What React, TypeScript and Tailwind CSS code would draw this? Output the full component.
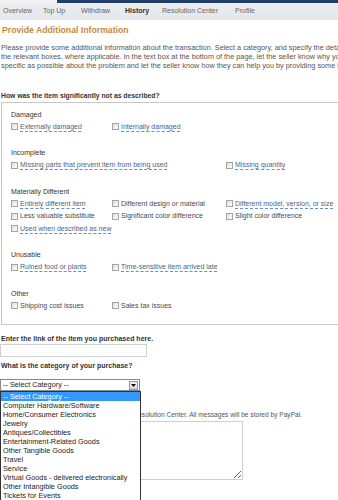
const TABS = [
  { label: "Overview", x: "w-[40px]" },
  { label: "Top Up", x: "w-[38px]" },
  { label: "Withdraw", x: "w-[44px]" },
  { label: "History", x: "w-[37px]", active: true },
  { label: "Resolution Center", x: "w-[73px]" },
  { label: "Profile", x: "w-[40px]" },
];

const INTRO_LINES = [
  "Please provide some additional information about the transaction. Select a category, and specify the details of the problem by checking",
  "the relevant boxes, where applicable. In the text box at the bottom of the page, let the seller know why you are not satisfied. Be as",
  "specific as possible about the problem and let the seller know how they can help you by providing some information on a resolution.",
];

type Reason = { label: string; tip?: boolean; wide?: boolean };

const SECTIONS: { title: string; reasons: Reason[] }[] = [
  {
    title: "Damaged",
    reasons: [
      { label: "Externally damaged", tip: true },
      { label: "Internally damaged", tip: true },
    ],
  },
  {
    title: "Incomplete",
    reasons: [
      { label: "Missing parts that prevent item from being used", tip: true, wide: true },
      { label: "Missing quantity", tip: true },
    ],
  },
  {
    title: "Materially Different",
    reasons: [
      { label: "Entirely different item", tip: true },
      { label: "Different design or material" },
      { label: "Different model, version, or size", tip: true },
      { label: "Less valuable substitute" },
      { label: "Significant color difference" },
      { label: "Slight color difference" },
      { label: "Used when described as new", tip: true },
    ],
  },
  {
    title: "Unusable",
    reasons: [
      { label: "Ruined food or plants", tip: true },
      { label: "Time-sensitive item arrived late", tip: true },
    ],
  },
  {
    title: "Other",
    reasons: [{ label: "Shipping cost issues" }, { label: "Sales tax issues" }],
  },
];

const CATEGORIES = [
  "-- Select Category --",
  "Computer Hardware/Software",
  "Home/Consumer Electronics",
  "Jewelry",
  "Antiques/Collectibles",
  "Entertainment-Related Goods",
  "Other Tangible Goods",
  "Travel",
  "Service",
  "Virtual Goods - delivered electronically",
  "Other Intangible Goods",
  "Tickets for Events",
];

export default function App() {
  return (
    <div className="min-h-[520px] w-full overflow-hidden bg-white font-['Liberation_Sans',Arial,sans-serif] text-[#555]">
      <div className="w-[480px]">
        {/* header strip + tabs */}
        <div className="flex h-[3px]">
          <div className="w-[57px] bg-[#f2f3f5]" />
          <div className="flex-1 bg-[#213e69]" />
        </div>
        <nav className="flex h-[17px] items-center bg-gradient-to-b from-[#eceef1] to-[#e4e7eb] pl-[3px] text-[7px]">
          {TABS.map((tab) => (
            <span
              key={tab.label}
              className={`${tab.x} ${tab.active ? "font-bold text-[#333]" : "text-[#666]"}`}
            >
              {tab.label}
            </span>
          ))}
        </nav>

        <h1 className="mt-[4px] h-[12px] pl-[2px] text-[8.7px] leading-[12px] font-bold text-[#c68a3e]">
          Provide Additional Information
        </h1>

        <div className="mt-[6.5px] pl-[1px] text-[7.3px] leading-[9px] text-[#555]">
          {INTRO_LINES.map((line) => (
            <div key={line} className="whitespace-nowrap">
              {line}
            </div>
          ))}
        </div>

        <p className="mt-[21px] h-[9px] pl-[1px] text-[6.8px] leading-[9px] font-bold text-[#333]">
          How was the item significantly not as described?
        </p>

        <div className="mt-[2.5px] ml-[1px] border border-[#c8c8c8] pt-[6.5px] pb-[12px] pl-[9px]">
          {SECTIONS.map((section, i) => (
            <ReasonGroup key={section.title} first={i === 0} {...section} />
          ))}
        </div>

        <p className="mt-[9px] h-[9px] pl-[1px] text-[7px] leading-[9px] font-bold text-[#333]">
          Enter the link of the item you purchased here.
        </p>
        <div className="mt-[1px] h-[13px] w-[147px] border border-[#d0d0d0] bg-white" />

        <p className="mt-[4px] h-[9px] pl-[1px] text-[7px] leading-[9px] font-bold text-[#333]">
          What is the category of your purchase?
        </p>

        <div className="relative mt-[9px] w-[140px]">
          <div className="flex h-[12px] items-center border border-[#8a8a8a] bg-white pl-[2px] text-[7.3px] text-[#222]">
            <span className="flex-1">-- Select Category --</span>
            <span className="mr-[1px] flex h-[9px] w-[9px] items-center justify-center border border-[#9a9a9a] bg-gradient-to-b from-[#f4f4f4] to-[#d8d8d8]">
              <svg width="5" height="3" viewBox="0 0 5 3">
                <path d="M0 0h5L2.5 3z" fill="#111" />
              </svg>
            </span>
          </div>
          <ul className="absolute top-full left-0 z-10 w-[141px] border border-[#333] bg-white">
            {CATEGORIES.map((cat, i) => (
              <li
                key={cat}
                className={`h-[9px] px-[2px] text-[7.3px] leading-[9px] whitespace-nowrap ${
                  i === 0 ? "bg-[#3399ff] text-white" : "text-[#222]"
                }`}
              >
                {cat}
              </li>
            ))}
          </ul>
        </div>

        <p className="mt-[19px] h-[9px] pl-[1px] text-[6.6px] leading-[9px] whitespace-nowrap text-[#555]">
          Your message to the seller will be sent to the Resolution Center. All messages will be stored by PayPal.
        </p>
        <textarea className="mt-[1.5px] block h-[59px] w-[243px] border border-[#cfcfcf] bg-white" />
      </div>
    </div>
  );
}

function ReasonGroup({
  title,
  reasons,
  first,
}: {
  title: string;
  reasons: Reason[];
  first: boolean;
}) {
  return (
    <div className={first ? "" : "mt-[15px]"}>
      <h3 className="h-[9px] text-[7px] leading-[9px] text-[#333]">{title}</h3>
      <div className="mt-[2px] grid grid-cols-[101px_114px_max-content]">
        {reasons.map((r) => (
          <label
            key={r.label}
            className={`flex h-[12.5px] items-center text-[7px] whitespace-nowrap ${r.wide ? "col-span-2" : ""}`}
          >
            <span className="mr-[2px] inline-block h-[7px] w-[7px] border border-[#a4a4a4] bg-gradient-to-br from-[#dedede] to-white" />
            <span
              className={
                r.tip
                  ? "text-[#4a6487] underline decoration-[#6d8cc0] decoration-dashed underline-offset-[1.5px]"
                  : "text-[#4a4a4a]"
              }
            >
              {r.label}
            </span>
          </label>
        ))}
      </div>
    </div>
  );
}
